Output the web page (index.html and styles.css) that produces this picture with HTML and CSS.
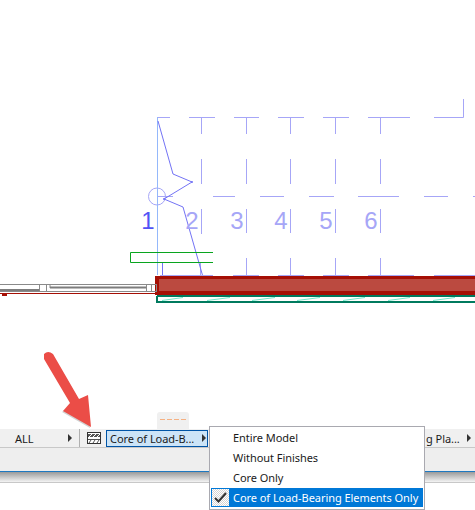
FILE: index.html
```html
<!DOCTYPE html>
<html lang="en">
<head>
  <meta charset="UTF-8">
  <title>Partial Structure Display</title>
  <link rel="stylesheet" href="styles.css">
</head>
<body>
  <div class="window">
    <!-- Plan drawing -->
    <svg class="plan" width="475" height="412" viewBox="0 0 475 412">
      <g class="grid">
        <path d="M157.500 117.500H170M189 117.500H215M234 117.500H259M278 117.500H304M323 117.500H349M368 117.500H410M434 117.500H463.500V99"/>
        <path d="M201.500 117V134M201.500 159V184M201.500 209V234M200.500 263V275"/>
        <path d="M246.500 117V134M246.500 159V184M246.500 209V233M246.500 258V275"/>
        <path d="M290.500 117V134M290.500 159V184M290.500 209V233M290.500 258V275"/>
        <path d="M335.500 117V134M335.500 159V184M335.500 209V233M335.500 258V275"/>
        <path d="M380.500 117V134M380.500 159V184M380.500 209V233M380.500 258V275"/>
        <path d="M213 196.500H235M260 196.500H284M309 196.500H334M358 196.500H399M424 196.500H448M473 196.500H475"/>
        <circle cx="157" cy="196.500" r="8.500"/>
        <path d="M157 196.500H173"/>
      </g>
      <path class="axis" d="M157.500 117V275"/>
      <path class="zigzag" d="M158 121L173 174L192 182L164 199L183 207L203 277M162.500 263V275"/>
      <circle class="vertex" cx="192" cy="182" r="1"/>
      <circle class="vertex" cx="164" cy="199" r="1"/>
      <text class="num num-first" x="148" y="229">1</text>
      <text class="num" x="192" y="229">2</text>
      <text class="num" x="237" y="229">3</text>
      <text class="num" x="281" y="229">4</text>
      <text class="num" x="326" y="229">5</text>
      <text class="num" x="371" y="229">6</text>
      <path class="beam" d="M213 252.500H130.500V262.500H213"/>
      <!-- Wall with the window to its left -->
      <rect class="wall-edge" x="155" y="276" width="320" height="19"/>
      <rect class="wall-fill" x="159" y="279" width="316" height="12"/>
      <path class="wall-top" d="M160 275.500H213M233 275.500H259M278 275.500H304M323 275.500H349M368 275.500H414M434 275.500H475"/>
      <path class="finish" d="M157 296V302H475M157 296H475"/>
      <path class="hatch" d="M162 300.500L183 297.500M207 300.500L230 297.500M252 300.500L275 297.500M297 300.500L320 297.500M343 300.500L365 297.500M388 300.500L410 297.500M433 300.500L455 297.500"/>
      <path class="sash" d="M0 284.500H157M0 291.500H157M39.500 284.500V291.500M46.500 284.500V291.500M50 284.500V288M146.500 284.500V291.500M151.500 284.500V291.500M156.500 284V292"/>
      <path class="sash-thick" d="M0 290H39M50 287.500H146"/>
      <path class="sill" d="M0 293.500H156"/>
      <rect class="wall-edge" x="2" y="294" width="5" height="2"/>
    </svg>

    <!-- Status bar -->
    <div class="tab-row">
      <div class="tab"><div class="dash"></div></div>
    </div>
    <div class="quick-bar">
      <div class="field field-all">
        <span>ALL</span>
        <i class="caret"></i>
      </div>
      <svg class="structure-icon" width="14" height="12" viewBox="0 0 14 12">
        <rect x=".5" y=".5" width="13" height="11" fill="#fff" stroke="#333"/>
        <rect x="1" y="2" width="12" height="3" fill="#555"/>
        <path d="M2 5L5 2M6 5L9 2M10 5L13 2" stroke="#fff"/>
        <path d="M1 7.500H13" stroke="#555"/>
        <path d="M2 11L4 8M6 11L8 8M10 11L12 8" stroke="#555"/>
      </svg>
      <div class="field field-selected">
        <span>Core of Load-B...</span>
        <i class="caret"></i>
      </div>
      <div class="field field-next">
        <span>g Pla...</span>
        <i class="caret"></i>
      </div>
    </div>
    <div class="lower-bar"></div>
    <div class="bar-shadow"></div>

    <!-- Popup menu -->
    <ul class="menu">
      <li class="menu-item"><span class="check"></span>Entire Model</li>
      <li class="menu-item"><span class="check"></span>Without Finishes</li>
      <li class="menu-item"><span class="check"></span>Core Only</li>
      <li class="menu-item active">
        <span class="check">
          <svg width="13" height="11" viewBox="0 0 13 11"><path d="M1 6L4.500 9.500L12 1" fill="none" stroke="#333" stroke-width="2"/></svg>
        </span>
        Core of Load-Bearing Elements Only
      </li>
    </ul>

    <!-- Annotation arrow -->
    <svg class="arrow" width="80" height="90" viewBox="40 345 80 90">
      <path d="M47 358L73 403L63 411L91 427L88 395L80 399L54 354Q50 351 47 354Z" transform="translate(-1 1)" fill="#000" opacity=".18"/>
      <path d="M44 359L70 403L63 411L91 427L88 395L79 399L53 354Q48 350 44 354Z" fill="#eb4d47"/>
    </svg>
  </div>
</body>
</html>
```

FILE: styles.css
```css
/* General */
body {
  margin: 0;
  background: #fff;
  font-family: "Noto Sans", sans-serif;
  font-size: 11px;
  letter-spacing: -0.05px;
  color: #1a1a1a;
}
.window {
  position: relative;
  width: 475px;
  height: 510px;
  overflow: hidden;
}
/* Plan drawing */
.plan {
  display: block;
}
.grid {
  fill: none;
  stroke: #a6a6f7;
  stroke-width: 1;
}
.axis {
  stroke: #94b8fb;
  fill: none;
}
.zigzag {
  stroke: #7373f5;
  fill: none;
}
.vertex {
  fill: #7373f5;
}
.num {
  font-family: "Liberation Sans", sans-serif;
  font-size: 24px;
  fill: #a6a6f7;
  text-anchor: middle;
}
.num-first {
  fill: #5252f5;
}
.beam {
  fill: none;
  stroke: #09a51f;
}
.wall-edge {
  fill: #a50f05;
}
.wall-fill {
  fill: #bb4a40;
}
.wall-top {
  stroke: #a6a6f7;
  fill: none;
}
.finish {
  fill: #fff;
  stroke: #007a5e;
  stroke-width: 2;
}
.hatch {
  stroke: #6eeacb;
  fill: none;
}
.sash {
  stroke: #8a8a8a;
  fill: none;
}
.sash-thick {
  stroke: #7d7d7d;
  stroke-width: 2;
  fill: none;
}
.sill {
  stroke: #a50f05;
  fill: none;
}
/* Status bar */
.tab-row {
  height: 17px;
  display: flex;
  padding-left: 157px;
}
.tab {
  width: 32px;
  background: #f0f0f0;
  border-radius: 3px 3px 0 0;
  padding: 7px 3px 0;
  box-sizing: border-box;
}
.dash {
  height: 1px;
  background: repeating-linear-gradient(90deg, #f5b183 0 5px, transparent 5px 7px);
}
.quick-bar {
  height: 19px;
  box-sizing: border-box;
  display: flex;
  align-items: center;
  background: #f0f0f0;
  border-bottom: 1px solid #c8c8c8;
}
.field {
  display: flex;
  align-items: center;
  justify-content: space-between;
  white-space: nowrap;
}
.field-all {
  width: 80px;
  height: 18px;
  box-sizing: border-box;
  padding: 0 7px 0 15px;
  border-right: 1px solid #b0b0b0;
}
.structure-icon {
  margin: 0 5px 0 7px;
  flex: none;
}
.field-selected {
  width: 102px;
  height: 17px;
  box-sizing: border-box;
  padding: 0 1px 0 3px;
  background: #cce4f7;
  border: 1px solid #0054a6;
  flex: none;
}
.field-next {
  flex: none;
  margin-left: 218px;
  width: 45px;
  box-sizing: border-box;
}
.caret {
  width: 0;
  height: 0;
  border-left: 4px solid #333;
  border-top: 4px solid transparent;
  border-bottom: 4px solid transparent;
}
.lower-bar {
  height: 23px;
  background: #eee;
  border-bottom: 1px solid #1e78c0;
}
.bar-shadow {
  height: 10px;
  background: linear-gradient(#9a9a9a, #f4f4f4);
  border-bottom: 1px solid #c8c8c8;
}
/* Popup menu */
.menu {
  position: absolute;
  left: 209px;
  top: 426px;
  width: 216px;
  height: 84px;
  box-sizing: border-box;
  margin: 0;
  padding: 1px 1px 0;
  list-style: none;
  background: #fff;
  border: 1px solid #a9a9b0;
}
.menu-item {
  display: flex;
  align-items: center;
  height: 20px;
  box-sizing: border-box;
  padding-bottom: 2px;
}
.menu-item.active {
  height: 19px;
  padding-bottom: 1px;
  background: #0078d7;
  color: #fff;
}
.check {
  width: 19px;
  height: 100%;
  margin-right: 3px;
  display: flex;
  align-items: center;
  justify-content: center;
  flex: none;
}
.active .check {
  height: 19px;
  margin-bottom: -1px;
  background: repeating-conic-gradient(#d4d4d4 0 25%, #fff 0 50%) 0 0 / 2px 2px;
  border: 1px solid #0078d7;
  box-sizing: border-box;
}
/* Annotation arrow */
.arrow {
  position: absolute;
  left: 40px;
  top: 345px;
}
```
